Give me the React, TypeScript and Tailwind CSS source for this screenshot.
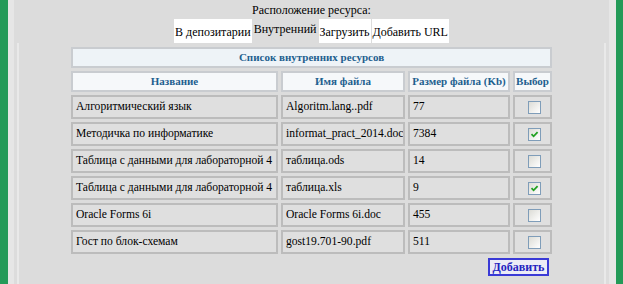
import React from 'react';

interface Resource {
  name: string;
  file: string;
  size: string;
  checked?: boolean;
}

const resources: Resource[] = [
  { name: 'Алгоритмический язык', file: 'Algoritm.lang..pdf', size: '77' },
  { name: 'Методичка по информатике', file: 'informat_pract_2014.doc', size: '7384', checked: true },
  { name: 'Таблица с данными для лабораторной 4', file: 'таблица.ods', size: '14' },
  { name: 'Таблица с данными для лабораторной 4', file: 'таблица.xls', size: '9', checked: true },
  { name: 'Oracle Forms 6i', file: 'Oracle Forms 6i.doc', size: '455' },
  { name: 'Гост по блок-схемам', file: 'gost19.701-90.pdf', size: '511' },
];

const tabs = [
  { label: 'В депозитарии', active: false },
  { label: 'Внутренний', active: true },
  { label: 'Загрузить', active: false },
  { label: 'Добавить URL', active: false },
];

function CheckBox({ checked }: { checked?: boolean }) {
  return (
    <div className="mx-auto w-[13px] h-[13px] border border-[#7f9db9] bg-gradient-to-br from-[#dcdcd6] to-white flex items-center justify-center">
      {checked && (
        <svg width="9" height="9" viewBox="0 0 9 9">
          <path d="M1.5 4.2 L3.6 6.3 L7.6 2.2" stroke="#21a121" strokeWidth="1.8" fill="none" />
        </svg>
      )}
    </div>
  );
}

const serifStyle = { fontFamily: '"Liberation Serif", "Times New Roman", serif' };
const cell = 'border-2 border-[#bcbcbc] bg-[#dfdfdf] pl-[3px] pr-0 py-0 h-[24px] text-[11.6px] leading-[14px] text-black';
const head = 'border-2 border-[#c9ccd0] bg-[#f6f8fa] h-[21px] p-0 text-[11px] leading-[13px] font-bold text-[#1e5f8f] text-center whitespace-nowrap';

export default function App() {
  return (
    <div className="w-[623px] h-[284px] flex overflow-hidden" style={serifStyle}>
      <div className="w-[8px] bg-[#239a58]" />
      <div className="w-[6px] bg-[#e6e6e6]" />
      <div className="flex-1 bg-[#dcdcdc] flex flex-col items-center">
        <div className="h-[19px] pt-[3px] text-[12px] leading-[14px] text-black">Расположение ресурса:</div>
        <div className="flex h-[24px] items-stretch gap-[1px] text-[12px] text-black">
          {tabs.map((t) => (
            <div
              key={t.label}
              className={`${t.active ? 'bg-[#dcdcdc] pt-[3px]' : 'bg-white pt-[6px]'} px-[1px] leading-[14px] whitespace-nowrap`}
            >
              {t.label}
            </div>
          ))}
        </div>
        <div className="self-stretch flex-1 mx-[3px] pt-[1px] border-x-2 border-[#e9e9e9] flex flex-col items-center">
          <table className="table-fixed border-separate border-spacing-[3px] w-[487px]" style={serifStyle}>
            <colgroup>
              <col className="w-[207px]" />
              <col className="w-[124px]" />
              <col className="w-[102px]" />
              <col className="w-[39px]" />
            </colgroup>
            <tbody>
              <tr>
                <td colSpan={4} style={serifStyle} className="border-2 border-[#c9ccd0] bg-[#eef3f7] h-[21px] p-0 text-[11px] leading-[13px] font-bold text-[#1e5f8f] text-center">
                  Список внутренних ресурсов
                </td>
              </tr>
              <tr>
                <td style={serifStyle} className={head}>Название</td>
                <td style={serifStyle} className={head}>Имя файла</td>
                <td style={serifStyle} className={head}>Размер файла (Kb)</td>
                <td style={serifStyle} className={head}>Выбор</td>
              </tr>
              {resources.map((r, i) => (
                <tr key={i}>
                  <td style={serifStyle} className={`${cell} whitespace-nowrap overflow-hidden`}>{r.name}</td>
                  <td style={serifStyle} className={`${cell} whitespace-nowrap overflow-hidden`}>{r.file}</td>
                  <td style={serifStyle} className={cell}>{r.size}</td>
                  <td className={cell}>
                    <CheckBox checked={r.checked} />
                  </td>
                </tr>
              ))}
            </tbody>
          </table>
          <div className="w-[487px] flex justify-end pr-[6px] mt-[1px]">
            <button style={serifStyle} className="w-[61px] h-[18px] border-2 border-[#3a3ad6] bg-[#ececf6] text-[12px] font-bold text-[#2323c0] leading-[14px]">
              Добавить
            </button>
          </div>
        </div>
      </div>
      <div className="w-[7px] bg-[#e6e6e6]" />
      <div className="w-[7px] bg-[#239a58]" />
    </div>
  );
}
